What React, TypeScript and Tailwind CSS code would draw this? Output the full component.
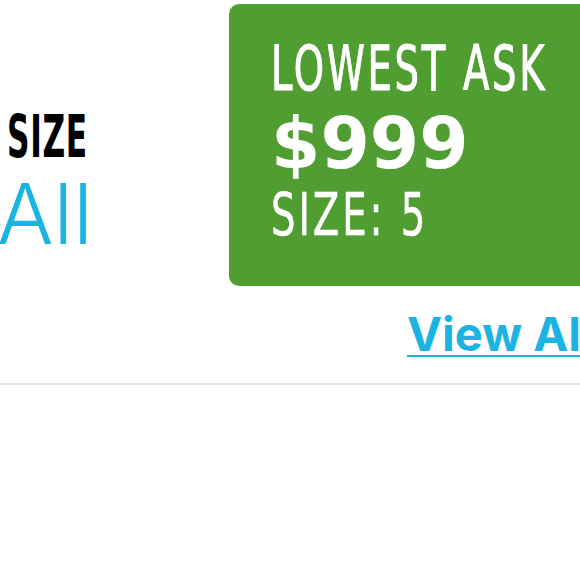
import React from "react";

const condensed = "font-['DejaVu_Sans_Condensed','DejaVu_Sans',sans-serif] whitespace-nowrap";

export default function App() {
  return (
    <div className="w-[580px] h-[580px] overflow-hidden bg-white relative">
      {/* TOP ROW */}
      <div className="flex items-start border-b-2 border-[#e2e2e2] h-[385px]">
        {/* SIZE column */}
        <div className="w-[229px] shrink-0 pt-[108px] flex flex-col items-start">
          <span className={`${condensed} font-bold text-black text-[58px] leading-none tracking-[1px] ml-[7px] origin-left scale-x-[0.6] inline-block`}>
            SIZE
          </span>
          <span className="font-['Inter',sans-serif] font-light text-[#1ab4e2] text-[84px] leading-none mt-[6px] ml-[-3px]">
            All
          </span>
        </div>

        {/* LOWEST ASK column */}
        <div className="flex flex-col shrink-0">
          <div className="mt-[4px] w-[420px] h-[282px] rounded-[10px] bg-[#509e31] pl-[42px] pt-[33px] flex flex-col items-start text-white">
            <span className={`${condensed} text-[63px] leading-none tracking-[4px] origin-left scale-x-[0.68] inline-block [-webkit-text-stroke:1px_#fff]`}>
              LOWEST ASK
            </span>
            <span className="font-['DejaVu_Sans',sans-serif] font-bold text-[71px] leading-none mt-[8px] whitespace-nowrap">
              $999
            </span>
            <span className={`${condensed} text-[58px] leading-none tracking-[4px] mt-[7px] origin-left scale-x-[0.74] inline-block [-webkit-text-stroke:0.5px_#fff]`}>
              SIZE: 5
            </span>
          </div>
          <a
            href="#"
            className="font-['Inter',sans-serif] font-bold text-[#1ab4e2] text-[47px] leading-none underline decoration-2 underline-offset-[4px] ml-[178px] mt-[24px] whitespace-nowrap"
          >
            View All
          </a>
        </div>
      </div>
    </div>
  );
}
